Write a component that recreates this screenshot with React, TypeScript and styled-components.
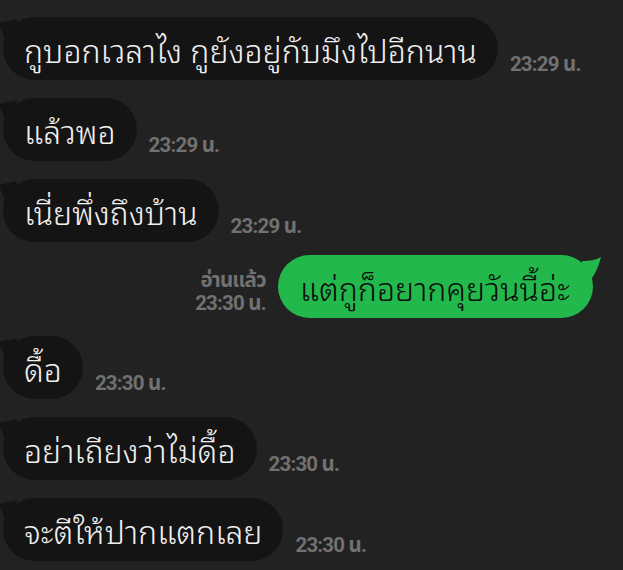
import React from "react";
import styled, { createGlobalStyle } from "styled-components";

const Global = createGlobalStyle`
  html, body { margin: 0; padding: 0; background: #222222; }
  body { width: 623px; height: 570px; overflow: hidden; }
`;

const Chat = styled.div`
  display: flex;
  flex-direction: column;
  padding: 17px 0 0 3px;
  width: 623px;
  box-sizing: border-box;
  font-family: "Noto Sans Thai Looped", "Noto Sans Thai", "Noto Sans", "Liberation Sans", sans-serif;
`;

const Row = styled.div<{ $mine?: boolean; $gap?: number }>`
  display: flex;
  align-items: flex-end;
  justify-content: ${(p) => (p.$mine ? "flex-end" : "flex-start")};
  margin-top: ${(p) => p.$gap ?? 18}px;
  padding-right: ${(p) => (p.$mine ? 30 : 0)}px;
  &:first-child { margin-top: 0; }
`;

const Bubble = styled.div<{ $mine?: boolean }>`
  position: relative;
  height: 63px;
  box-sizing: border-box;
  display: flex;
  align-items: center;
  padding: 0 ${(p) => (p.$mine ? 23 : 21)}px 0 ${(p) => (p.$mine ? 22 : 21)}px;
  border-radius: 32px;
  background: ${(p) => (p.$mine ? "#22b84b" : "#141414")};
  color: ${(p) => (p.$mine ? "#0d0d0d" : "#f0f0f0")};
  font-size: 32px;
  font-weight: 300;
  white-space: nowrap;
`;

const TailLeft = styled.svg`
  position: absolute;
  left: -6px;
  top: 0;
`;

const TailRight = styled.svg`
  position: absolute;
  right: -9px;
  top: 0;
`;

const Meta = styled.div<{ $mine?: boolean }>`
  display: flex;
  flex-direction: column;
  align-items: ${(p) => (p.$mine ? "flex-end" : "flex-start")};
  margin: ${(p) => (p.$mine ? "0 12px 3px 0" : "0 0 4px 12px")};
  font-family: Roboto, "Noto Sans Thai", "Liberation Sans", sans-serif;
  font-weight: 700;
  font-size: 20.5px;
  letter-spacing: -0.8px;
  line-height: 23px;
  color: #717171;
`;

type Msg = { text: string; time: string; mine?: boolean; read?: boolean; gap?: number };

const messages: Msg[] = [
  { text: "กูบอกเวลาไง กูยังอยู่กับมึงไปอีกนาน", time: "23:29 น." },
  { text: "แล้วพอ", time: "23:29 น." },
  { text: "เนี่ยพึ่งถึงบ้าน", time: "23:29 น." },
  { text: "แต่กูก็อยากคุยวันนี้อ่ะ", time: "23:30 น.", mine: true, read: true, gap: 13 },
  { text: "ดื้อ", time: "23:30 น." },
  { text: "อย่าเถียงว่าไม่ดื้อ", time: "23:30 น." },
  { text: "จะตีให้ปากแตกเลย", time: "23:30 น." },
];

export default function App() {
  return (
    <>
      <Global />
      <Chat>
        {messages.map((m, i) =>
          m.mine ? (
            <Row key={i} $mine $gap={m.gap}>
              <Meta $mine>
                {m.read && <span>อ่านแล้ว</span>}
                <span>{m.time}</span>
              </Meta>
              <Bubble $mine>
                <TailRight width="20" height="30" viewBox="0 0 20 30">
                  <path d="M0 6 C8 6 14 5 19 2 C17 10 14 18 8 26 L0 26 Z" fill="#22b84b" />
                </TailRight>
                {m.text}
              </Bubble>
            </Row>
          ) : (
            <Row key={i} $gap={m.gap}>
              <Bubble>
                <TailLeft width="20" height="30" viewBox="0 0 20 30">
                  <path d="M20 2 C12 4 6 5 0 6 C4 10 7 16 8 26 L20 26 Z" fill="#141414" />
                </TailLeft>
                {m.text}
              </Bubble>
              <Meta>
                <span>{m.time}</span>
              </Meta>
            </Row>
          )
        )}
      </Chat>
    </>
  );
}
